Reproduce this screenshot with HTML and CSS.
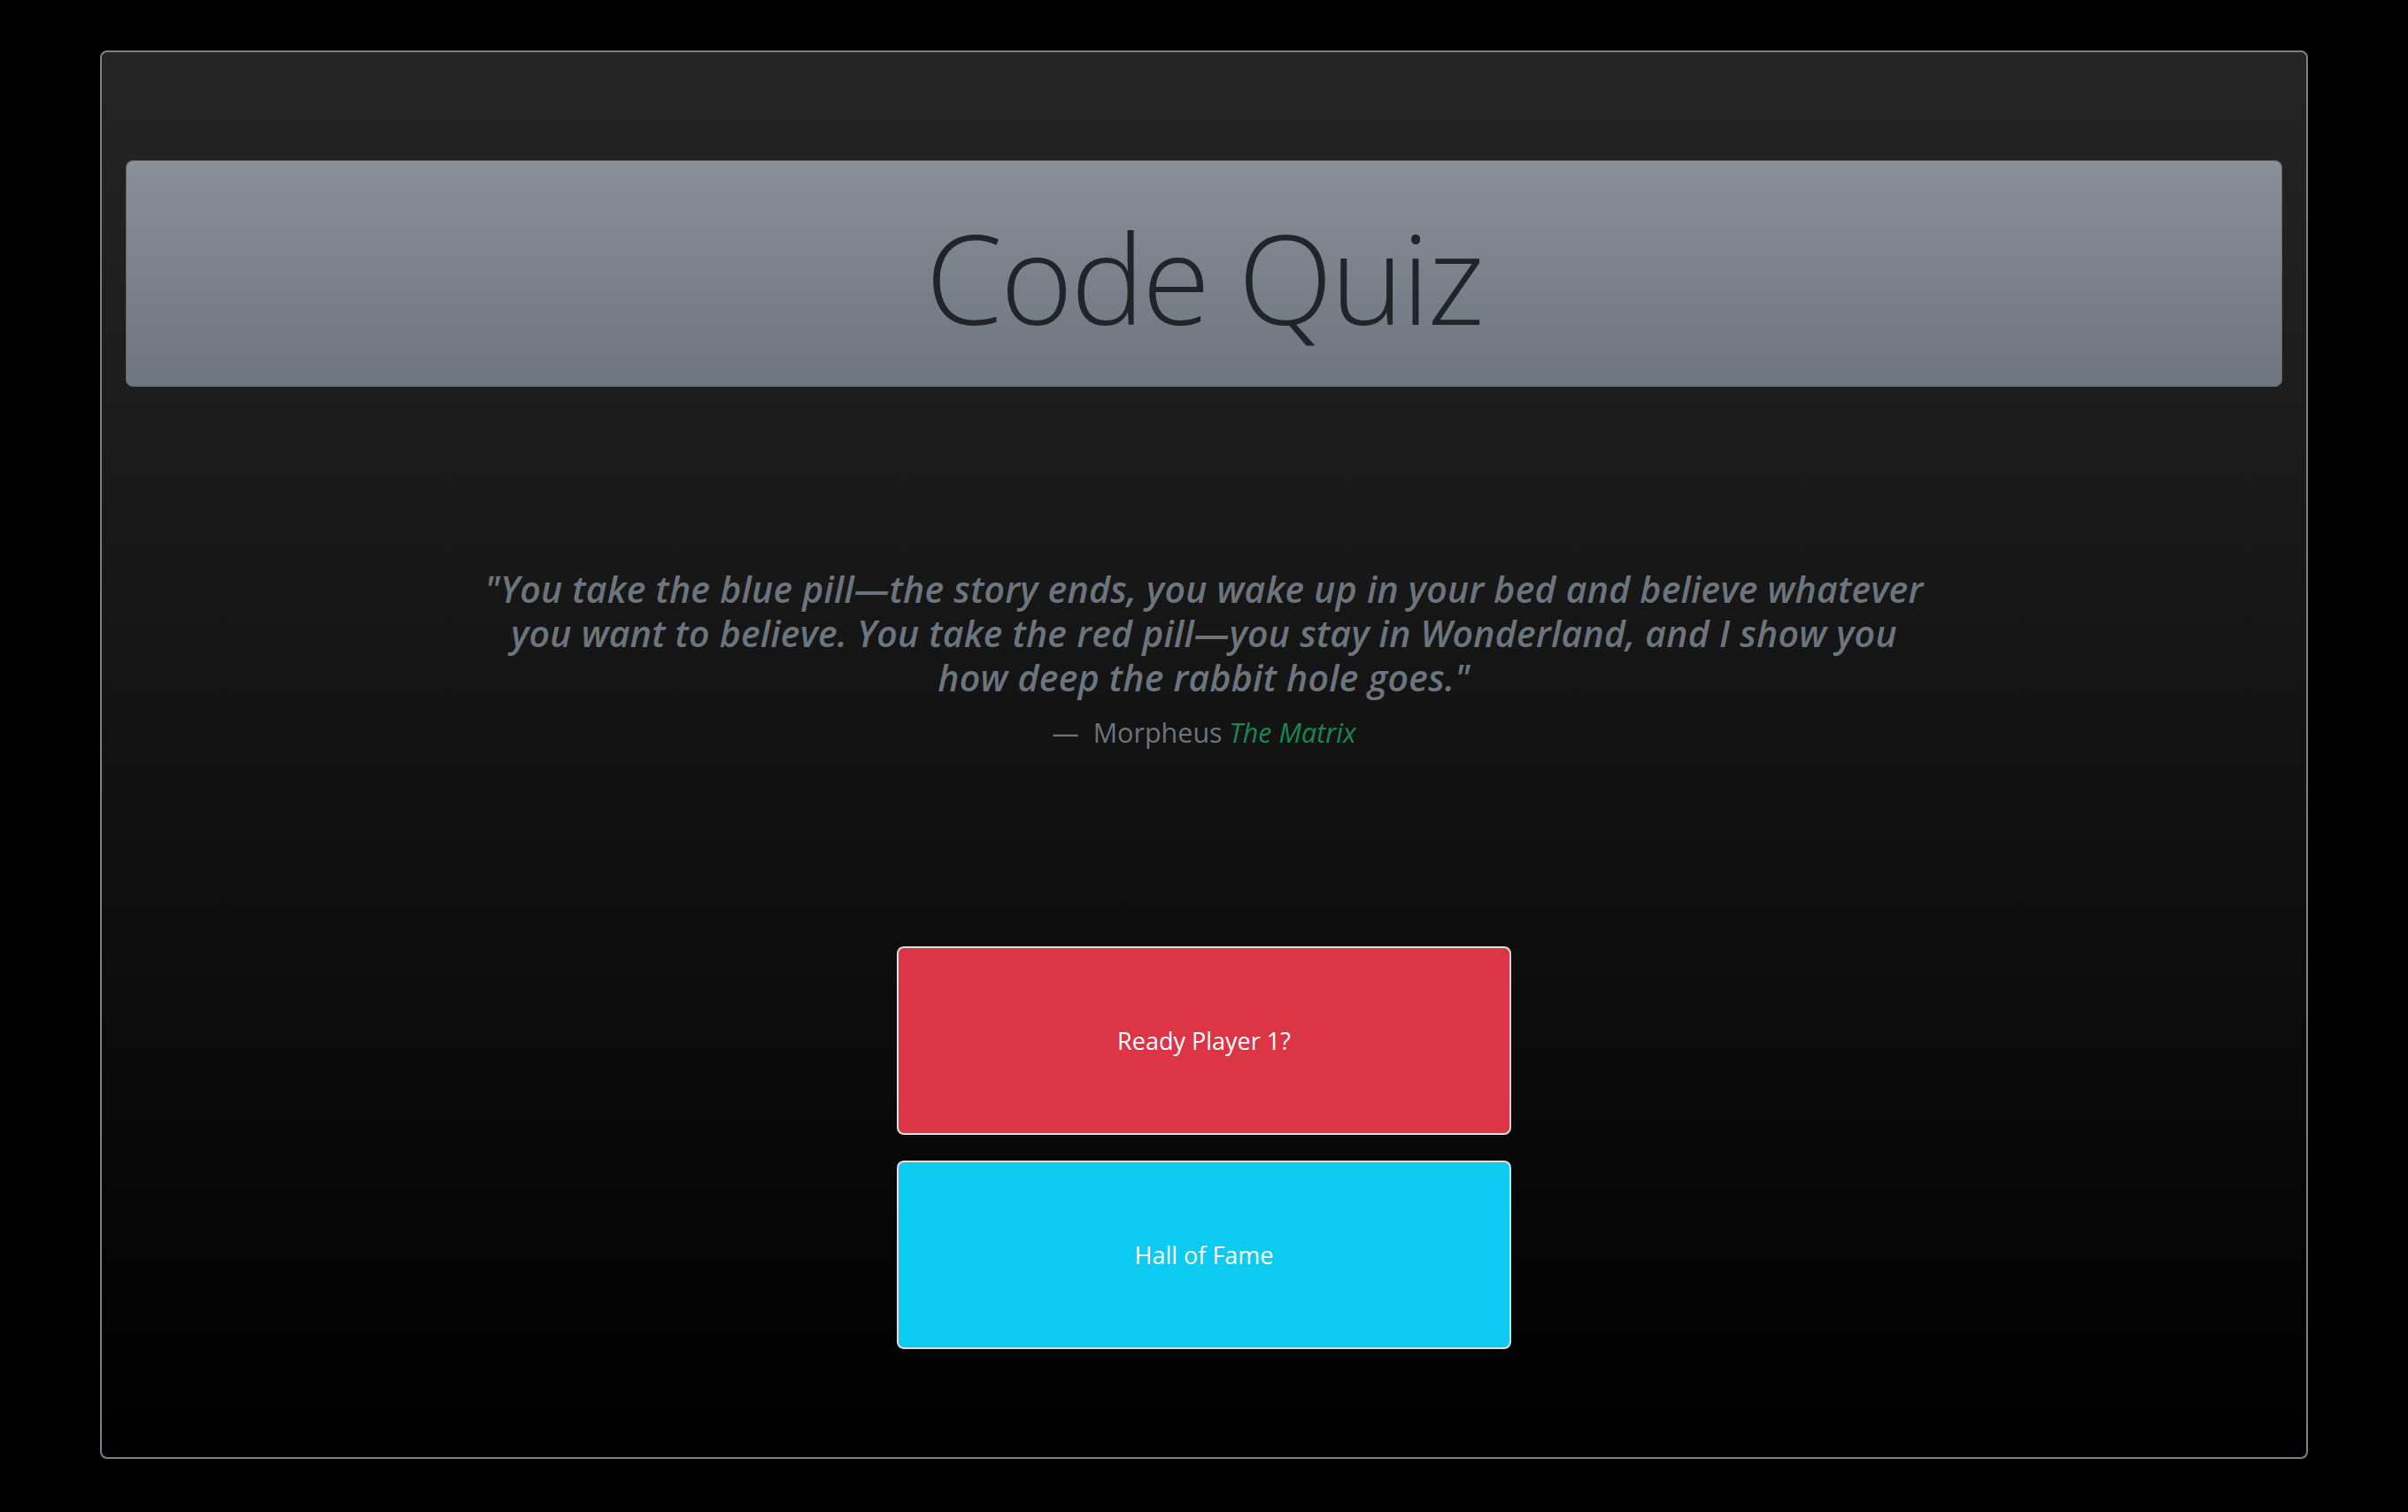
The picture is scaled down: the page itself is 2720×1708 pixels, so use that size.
FILE: index.html
```html
<!DOCTYPE html>
<html lang="en">
<head>
<meta charset="utf-8">
<title>Code Quiz</title>
<link rel="stylesheet" href="styles.css">
</head>
<body>
<main class="card">
  <header class="jumbo">
    <h1 class="title">Code Quiz</h1>
  </header>
  <figure class="quote">
    <blockquote class="quote-text">
      <p>"You take the blue pill—the story ends, you wake up in your bed and believe whatever<br>you want to believe. You take the red pill—you stay in Wonderland, and I show you<br>how deep the rabbit hole goes."</p>
    </blockquote>
    <figcaption class="quote-footer">Morpheus <cite class="source">The Matrix</cite></figcaption>
  </figure>
  <div class="actions">
    <button class="btn btn-start">Ready Player 1?</button>
    <button class="btn btn-fame">Hall of Fame</button>
  </div>
</main>
</body>
</html>
```

FILE: styles.css
```css
html, body {
  margin: 0;
  padding: 0;
  background: #000;
}

body {
  font-family: "Open Sans", "Noto Sans", sans-serif;
  padding-top: 57px;
}

.card {
  box-sizing: border-box;
  margin: 0 113px;
  padding: 0 27px 122px;
  border: 2px solid #788189;
  border-radius: 8px;
  background: linear-gradient(to bottom, #252525 0%, #000000 100%);
  display: flex;
  flex-direction: column;
  align-items: stretch;
}

.jumbo {
  margin-top: 122px;
  padding: 47px 0 39px;
  border: 1px solid #60676f;
  border-radius: 8px;
  background: linear-gradient(to bottom, #888f97 0%, #6d757e 100%);
  text-align: center;
}

.title {
  margin: 0;
  font-family: "Open Sans", "Noto Sans", sans-serif;
  font-weight: 300;
  font-size: 140px;
  line-height: 168px;
  color: #212529;
  letter-spacing: -2.5px;
}

.quote {
  margin: 203px 0 0;
  text-align: center;
}

.quote-text {
  margin: 0;
}

.quote-text p {
  margin: 0;
  font-style: italic;
  font-weight: 600;
  font-size: 41px;
  line-height: 50px;
  letter-spacing: 0.25px;
  color: #6c757d;
  white-space: nowrap;
}

.quote-footer {
  margin-top: 14px;
  font-size: 30.5px;
  line-height: 46.5px;
  color: #6c757d;
}

.quote-footer::before {
  content: "\2014\00A0\00A0";
}

.source {
  font-style: italic;
  color: #198754;
}

.actions {
  margin-top: 218px;
  display: flex;
  flex-direction: column;
  align-items: center;
  gap: 29px;
}

.btn {
  box-sizing: border-box;
  width: 694px;
  height: 213px;
  border: 2px solid #dcdfe2;
  border-radius: 8px;
  font-family: "Open Sans", "Noto Sans", sans-serif;
  font-size: 27px;
  color: #fff;
  cursor: pointer;
}

.btn-start {
  background: #dc3545;
}

.btn-fame {
  background: #0dcaf0;
}
```
